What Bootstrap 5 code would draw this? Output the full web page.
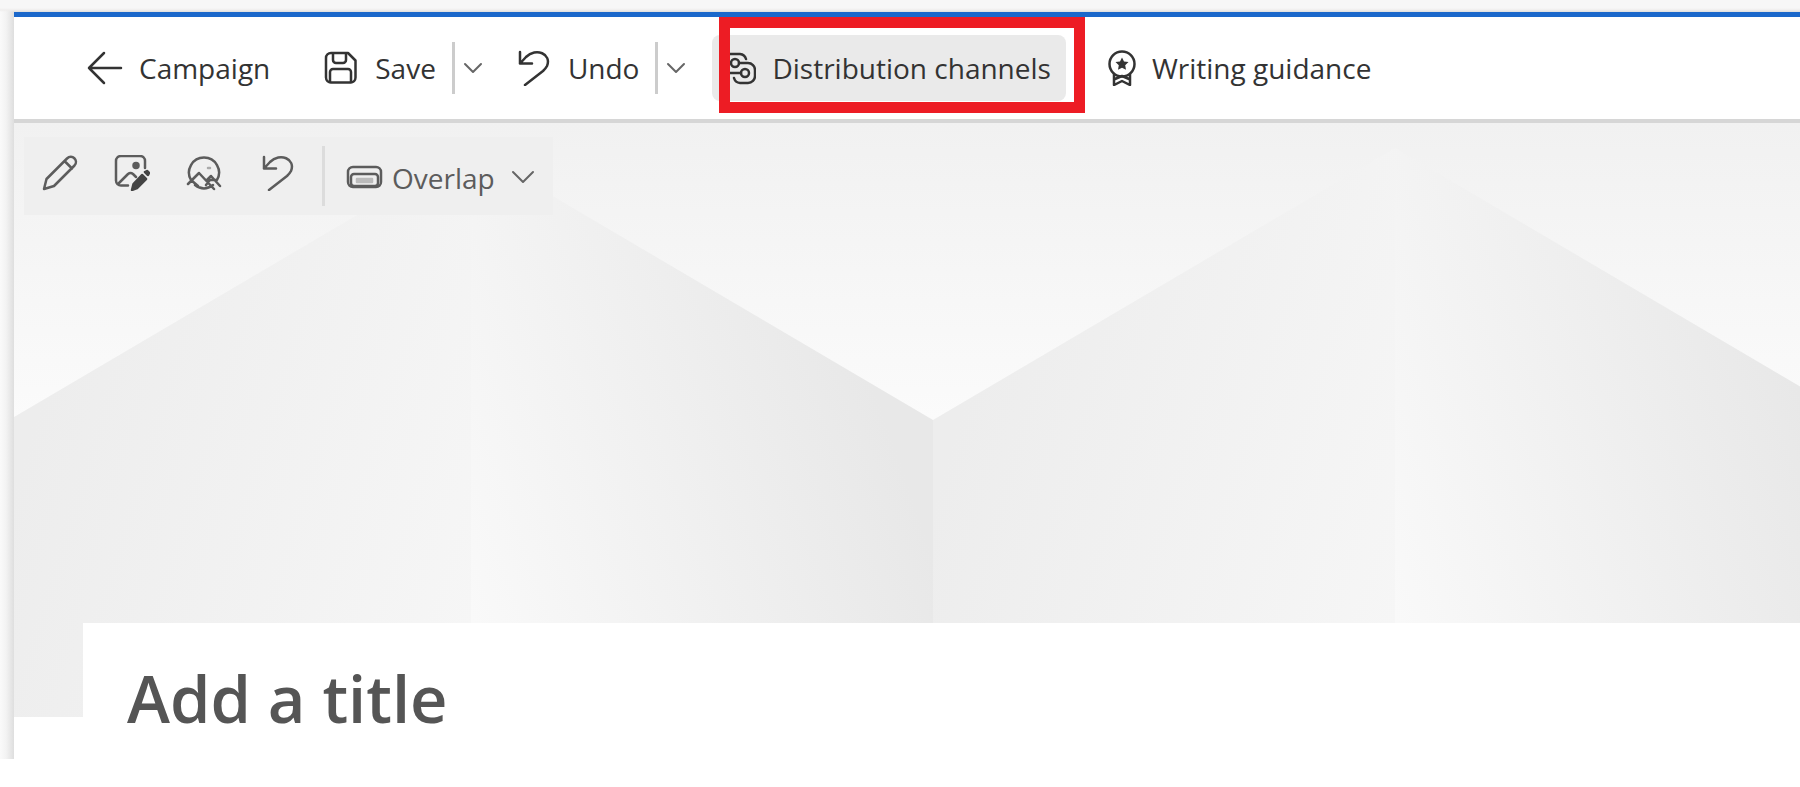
<!DOCTYPE html>
<html lang="en">
<head>
<meta charset="utf-8">
<meta name="viewport" content="width=device-width, initial-scale=1">
<title>Campaign editor</title>
<link href="https://cdn.jsdelivr.net/npm/bootstrap@5.3.0/dist/css/bootstrap.min.css" rel="stylesheet">
<style>
  body { font-family: "Open Sans", "Noto Sans", sans-serif; font-size: 28px; line-height: 40px; color: #333; background: #fff; }
  svg { fill: none; stroke: currentColor; stroke-width: 2.5; stroke-linecap: round; stroke-linejoin: round; flex: none; display: block; }
  .chevron { stroke: #666; stroke-width: 2; }
  .app-frame { padding: 12px 0 0 14px; background: linear-gradient(#f7f7f7 8px, #efeeed 10px, transparent 12px), linear-gradient(90deg, #fafafa 0, #f3f3f3 6px, #dedede 14px) no-repeat #f7f7f7; }
  .app-page { border-top: 5px solid #1b68cb; background: #fff; }
  .command-bar { height: 106px; padding-left: 73px; border-bottom: 4px solid #d6d6d6; }
  .tool { display: flex; align-items: center; gap: 16px; padding: 0; border: 0; background: none; color: inherit; text-decoration: none; white-space: nowrap; font-size: 28px; line-height: 40px; }
  .divider { width: 3px; height: 52px; background: #ccc; flex: none; }
  .split-divider { margin: 0 8px 0 16px; }
  .group-gap { margin-left: 53px; }
  .split-gap { margin-left: 33px; }
  .tool-active { height: 66px; margin-left: 26px; padding: 0 15px 0 8px; border-radius: 8px; background: #eaeaea; }
  .callout-wrap { position: relative; }
  .callout { position: absolute; top: -18px; bottom: -12px; left: 33px; right: -19px; border: 11px solid #ed1c24; pointer-events: none; }
  .guide-gap { margin-left: 34px; }
  .hero { position: relative; isolation: isolate; padding: 14px 0 0 10px; min-height: 594px; margin-bottom: -94px; }
  .hero-art { position: absolute; inset: 0; width: 100%; height: 100%; z-index: -1; stroke: none; }
  .image-bar { width: max-content; height: 78px; padding: 0 18px; background: #efefef; color: #5c5c5c; }
  .icon-row { gap: 36px; padding-bottom: 6px; }
  .bar-divider { height: 60px; margin: 0 21px 0 28px; background: #dcdcdc; }
  .title-sheet { position: relative; margin-left: 69px; min-height: 136px; padding: 30px 40px 16px 44px; background: #fff; }
  .title-input { border: 0; padding: 0; outline: 0; width: 100%; height: 90px; font-size: 65px; line-height: 90px; font-weight: 600; color: #555; background: none; }
  .title-input::placeholder { color: #555; opacity: 1; }
</style>
<script src="https://cdn.jsdelivr.net/npm/bootstrap@5.3.0/dist/js/bootstrap.bundle.min.js"></script>
</head>
<body>
<div class="app-frame overflow-hidden">
  <div class="app-page">
    <nav class="command-bar d-flex align-items-center" aria-label="Commands">
      <a class="tool" href="#">
        <svg width="36" height="36" viewBox="0 0 36 36"><path d="M34 18H2M17 3 2 18l15 15"/></svg>
        Campaign
      </a>
      <button class="tool group-gap" type="button">
        <svg width="36" height="36" viewBox="0 0 36 36"><path d="M8 3h17l7.500 7.500v17a5 5 0 0 1-5 5H8a5 5 0 0 1-5-5v-19.500a5 5 0 0 1 5-5z"/><path d="M10 4v6a3 3 0 0 0 3 3h7a3 3 0 0 0 3-3V4M7 32V22a3 3 0 0 1 3-3h15a3 3 0 0 1 3 3v10"/></svg>
        Save
      </button>
      <span class="divider split-divider"></span>
      <button class="tool" type="button" aria-label="Save options"><svg class="chevron" width="20" height="20" viewBox="0 0 20 20"><path d="m2 6 8 8 8-8"/></svg></button>
      <button class="tool split-gap" type="button">
        <svg width="36" height="36" viewBox="0 0 36 36"><path d="M4 2v11.500h12M4 13.500 10 7C20-3 36 4 31 16c-1 2-2 3-4 5L9 35"/></svg>
        Undo
      </button>
      <span class="divider split-divider"></span>
      <button class="tool" type="button" aria-label="Undo options"><svg class="chevron" width="20" height="20" viewBox="0 0 20 20"><path d="m2 6 8 8 8-8"/></svg></button>
      <div class="callout-wrap">
        <button class="tool tool-active" type="button">
          <svg width="36" height="36" viewBox="0 0 36 36"><circle cx="15" cy="13" r="4"/><circle cx="25" cy="23" r="4"/><path d="M26 9a7 7 0 0 0-6-5H10a7 7 0 0 0-7 7v5a7 7 0 0 0 7 7h11M19 13h9a7 7 0 0 1 7 7v6a7 7 0 0 1-7 7h-8a7 7 0 0 1-6-5"/></svg>
          Distribution channels
        </button>
        <span class="callout"></span>
      </div>
      <button class="tool guide-gap" type="button">
        <svg width="36" height="36" viewBox="0 0 36 36"><circle cx="22" cy="14" r="12.500"/><path d="M14 24v11l8-4 8 4V24M15 29l7-3 7 3"/><path fill="currentColor" stroke="none" d="m22 7.500 2 4 4.500.600-3.300 3.200.8 4.500-4-2.100-4 2.100.8-4.500-3.300-3.200 4.500-.600z"/></svg>
        Writing guidance
      </button>
    </nav>

    <section class="hero" aria-label="Title image">
      <svg class="hero-art" aria-hidden="true">
        <defs>
          <linearGradient id="sky" x1="0" y1="0" x2="0" y2="1"><stop offset="0" stop-color="#f1f1f1"/><stop offset=".5" stop-color="#fbfbfb"/></linearGradient>
          <linearGradient id="faceLeft" gradientUnits="userSpaceOnUse" x1="0" y1="380" x2="462" y2="520"><stop offset="0" stop-color="#ededed"/><stop offset="1" stop-color="#f6f6f6"/></linearGradient>
          <linearGradient id="faceRight" gradientUnits="userSpaceOnUse" x1="462" y1="580" x2="920" y2="420"><stop offset="0" stop-color="#fafafa"/><stop offset="1" stop-color="#e8e8e8"/></linearGradient>
          <pattern id="peaks" x="-5" width="924" height="600" patternUnits="userSpaceOnUse">
            <path fill="url(#faceLeft)" d="M0 297 462 25V600H0z"/>
            <path fill="url(#faceRight)" d="M462 25 924 297V600H462z"/>
          </pattern>
        </defs>
        <rect width="100%" height="100%" fill="url(#sky)"/>
        <rect width="100%" height="100%" fill="url(#peaks)"/>
      </svg>
      <div class="image-bar d-flex align-items-center" role="toolbar" aria-label="Image tools">
        <div class="icon-row d-flex">
          <button class="tool" type="button" aria-label="Edit"><svg width="36" height="36" viewBox="0 0 36 36"><path d="m2 34 2.500-10L25 3.500c5-5 12 2 7.500 7L12 31zM22.500 6l7.500 7.500"/></svg></button>
          <button class="tool" type="button" aria-label="Edit image"><svg width="36" height="36" viewBox="0 0 36 36"><path d="M14 30.500H7a5 5 0 0 1-5-5V6a5 5 0 0 1 5-5h19a5 5 0 0 1 5 5v7M4 29l10-10q2.500-2 5 0l3 3"/><circle cx="22" cy="10.500" r="2.500" fill="currentColor"/><path d="m18 35 1.500-6L28 20l4 4-9 9zM31 17l2-1 2 2-1 2z" fill="#444" stroke="#444"/></svg></button>
          <button class="tool" type="button" aria-label="Focal point"><svg width="36" height="36" viewBox="0 0 36 36"><path d="M5 25A15 15 0 1 1 31 25M9 30q9 7 18 0M2 29l11-11 15 16M21 25l4-4 9 10M5 25l7 6M20 30l4-5 6 0"/><path d="M22 13h2" stroke="#aaa"/></svg></button>
          <button class="tool" type="button" aria-label="Reset"><svg width="36" height="36" viewBox="0 0 36 36"><path d="M6 2v11.500h12M6 13.500 12 7C22-3 38 4 33 16c-1 2-2 3-4 5L11 35"/></svg></button>
        </div>
        <span class="divider bar-divider"></span>
        <button class="tool gap-2 pt-1" type="button">
          <svg width="38" height="36" viewBox="0 0 38 36"><rect x="2" y="7" width="33" height="20" rx="5"/><rect x="5" y="14" width="27" height="12" rx="3"/><path d="M11 19h15v3H11z" fill="#bbb" stroke="#bbb"/></svg>
          Overlap
          <svg class="chevron ms-2" width="24" height="24" viewBox="0 0 24 24"><path d="m2 6 10 10L22 6"/></svg>
        </button>
      </div>
    </section>

    <div class="title-sheet">
      <input class="title-input" type="text" placeholder="Add a title" aria-label="Page title">
    </div>
  </div>
</div>
</body>
</html>
